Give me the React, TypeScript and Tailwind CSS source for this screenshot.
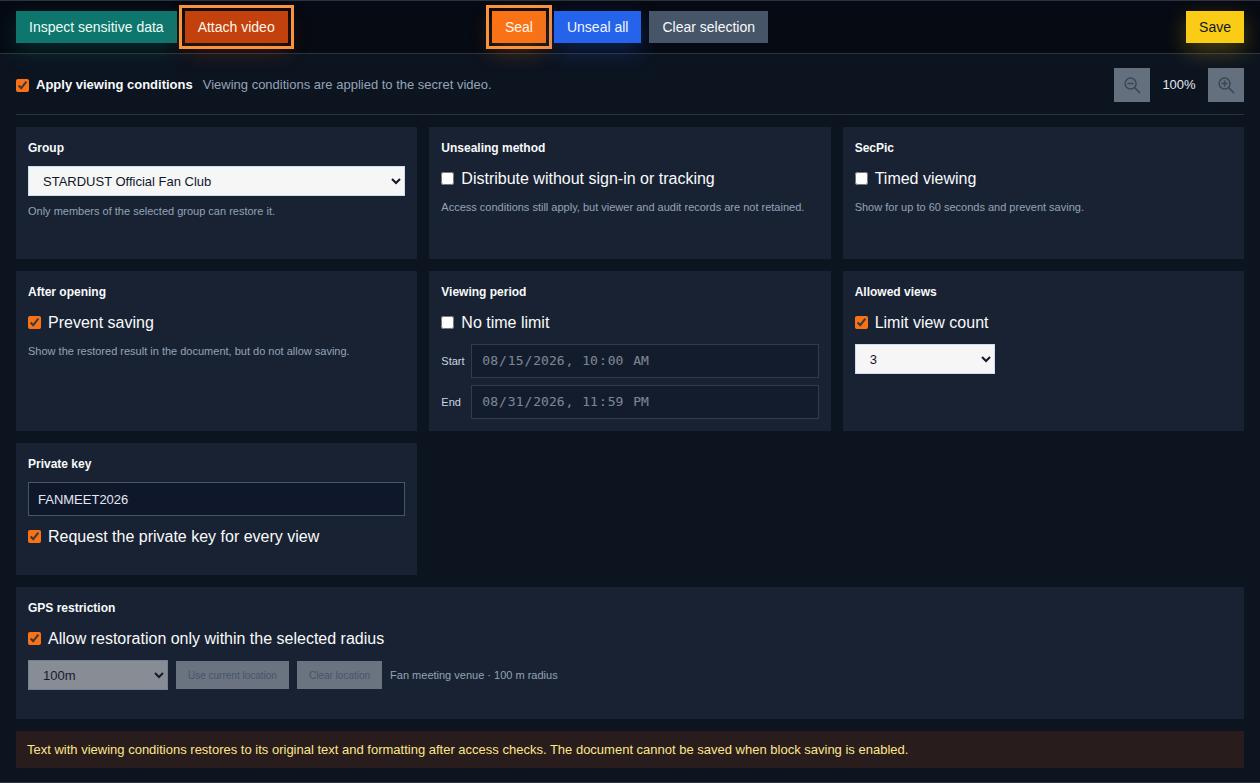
import { type ReactNode } from 'react';

interface CardProps {
  title: string;
  className?: string;
  children: ReactNode;
}

function Card({ title, className = '', children }: CardProps) {
  return (
    <section className={`flex min-h-[132px] flex-col gap-2 bg-[#192232] p-3 ${className}`}>
      <h2 className="text-xs leading-[19px] font-bold text-[#f8fafc]">{title}</h2>
      {children}
    </section>
  );
}

function CheckRow({ label, checked = false }: { label: string; checked?: boolean }) {
  return (
    <label className="mb-px flex items-center gap-[7px] text-base leading-[25px] text-[#f8fafc]">
      <input type="checkbox" defaultChecked={checked} className="h-[13px] w-[13px] accent-[#f97316]" />
      {label}
    </label>
  );
}

function Hint({ children }: { children: ReactNode }) {
  return <p className="text-[11px] leading-[14px] text-[#94a3b8]">{children}</p>;
}

function ZoomIcon({ plus = false }: { plus?: boolean }) {
  return (
    <svg className="h-[18px] w-[18px]" viewBox="0 0 18 18" fill="none" stroke="currentColor" strokeWidth="1.5" strokeLinecap="round">
      <circle cx="7.6" cy="7.6" r="5.5" />
      <path d="M11.6 11.6 16.6 16.6M5.1 7.6h5" />
      {plus && <path d="M7.6 5.1v5" />}
    </svg>
  );
}

const selectClass =
  'h-[30px] border border-[#cbdff2] bg-[#f6f6f6] px-[10px] text-[13px] text-[#0f172a] disabled:opacity-50';
const dateClass =
  'h-[34px] min-w-0 flex-1 border border-[#475569] bg-[#0f172a] px-[9px] font-["DejaVu_Sans_Mono",monospace] text-[13px] text-[#e2e8f0] disabled:opacity-50';

export default function App() {
  return (
    <div className='border-y border-[#2b333e] bg-[#0c1420] pb-[14px] font-["Liberation_Sans",Arial,sans-serif] text-[#f8fafc]'>
      <header className="grid h-[53px] grid-cols-[1fr_auto_1fr] items-center border-b border-[#2b333e] bg-[#060a12] px-4 text-sm">
        <div className="flex gap-2">
          <button className="h-8 bg-[#0f766e] px-[13px] text-[#ecfdf5] shadow-[0_8px_22px_rgba(15,118,110,0.28)]">Inspect sensitive data</button>
          <button className="h-8 bg-[#c2410c] px-[13px] text-[#fff7ed] shadow-[0_8px_22px_rgba(194,65,12,0.28)] outline-[3px] outline-offset-[3px] outline-[#fb923c]">Attach video</button>
        </div>
        <div className="flex gap-2">
          <button className="h-8 bg-[#f97316] px-[13px] text-[#fff7ed] shadow-[0_8px_22px_rgba(249,115,22,0.28)] outline-[3px] outline-offset-[3px] outline-[#fb923c]">Seal</button>
          <button className="h-8 bg-[#2563eb] px-[13px] text-[#eff6ff] shadow-[0_8px_22px_rgba(37,99,235,0.28)]">Unseal all</button>
          <button className="h-8 bg-[#475569] px-[13px] text-[#f8fafc]">Clear selection</button>
        </div>
        <div className="flex justify-end">
          <button className="h-8 bg-[#facc15] px-[13px] text-[#111827] shadow-[0_8px_22px_rgba(250,204,21,0.28)]">Save</button>
        </div>
      </header>

      <main className="flex flex-col gap-3 px-4 pt-[14px]">
        <div className="flex items-center border-b border-[#2b333e] pb-3 text-[13px]">
          <label className="flex items-center gap-[7px] font-bold">
            <input type="checkbox" defaultChecked className="h-[13px] w-[13px] accent-[#f97316]" />
            Apply viewing conditions
          </label>
          <p className="ml-[10px] text-[#94a3b8]">Viewing conditions are applied to the secret video.</p>
          <div className="ml-auto flex items-center gap-2">
            <button disabled aria-label="Zoom out" className="flex h-[34px] w-9 items-center justify-center bg-[#64707e] text-[#3b4658]">
              <ZoomIcon />
            </button>
            <span className="w-[42px] text-center text-[#e2e8f0]">100%</span>
            <button disabled aria-label="Zoom in" className="flex h-[34px] w-9 items-center justify-center bg-[#64707e] text-[#3b4658]">
              <ZoomIcon plus />
            </button>
          </div>
        </div>

        <div className="grid grid-cols-3 gap-3">
          <Card title="Group">
            <select aria-label="Group" className={`${selectClass} w-full`}>
              <option>STARDUST Official Fan Club</option>
            </select>
            <Hint>Only members of the selected group can restore it.</Hint>
          </Card>

          <Card title="Unsealing method">
            <CheckRow label="Distribute without sign-in or tracking" />
            <Hint>Access conditions still apply, but viewer and audit records are not retained.</Hint>
          </Card>

          <Card title="SecPic">
            <CheckRow label="Timed viewing" />
            <Hint>Show for up to 60 seconds and prevent saving.</Hint>
          </Card>

          <Card title="After opening">
            <CheckRow label="Prevent saving" checked />
            <Hint>Show the restored result in the document, but do not allow saving.</Hint>
          </Card>

          <Card title="Viewing period">
            <CheckRow label="No time limit" />
            <div className="flex flex-col gap-[7px] text-[11px] text-[#cbd5e1]">
              <label className="flex items-center">
                <span className="w-[30px]">Start</span>
                <input type="datetime-local" disabled defaultValue="2026-08-15T10:00" className={dateClass} />
              </label>
              <label className="flex items-center">
                <span className="w-[30px]">End</span>
                <input type="datetime-local" disabled defaultValue="2026-08-31T23:59" className={dateClass} />
              </label>
            </div>
          </Card>

          <Card title="Allowed views">
            <CheckRow label="Limit view count" checked />
            <select aria-label="Allowed views" className={`${selectClass} w-[140px]`}>
              <option>3</option>
            </select>
          </Card>

          <Card title="Private key">
            <input
              type="text"
              aria-label="Private key"
              defaultValue="FANMEET2026"
              className="h-[34px] w-full border border-[#475569] bg-[#0f172a] px-[9px] text-[13px] text-[#e2e8f0]"
            />
            <CheckRow label="Request the private key for every view" checked />
          </Card>

          <Card title="GPS restriction" className="col-span-3">
            <CheckRow label="Allow restoration only within the selected radius" checked />
            <div className="flex items-center gap-2">
              <select disabled aria-label="Radius" className={`${selectClass} w-[140px]`}>
                <option>100m</option>
              </select>
              <button disabled className="h-7 bg-[#6b7280] px-3 text-[10px] text-[#475569]">Use current location</button>
              <button disabled className="h-7 bg-[#6b7280] px-3 text-[10px] text-[#475569]">Clear location</button>
              <Hint>Fan meeting venue · 100 m radius</Hint>
            </div>
          </Card>
        </div>

        <p className="bg-[#281c1d] px-[11px] py-2 text-[13px] leading-[21px] text-[#fde68a]">
          Text with viewing conditions restores to its original text and formatting after access checks. The document cannot be saved when block saving is enabled.
        </p>
      </main>
    </div>
  );
}
